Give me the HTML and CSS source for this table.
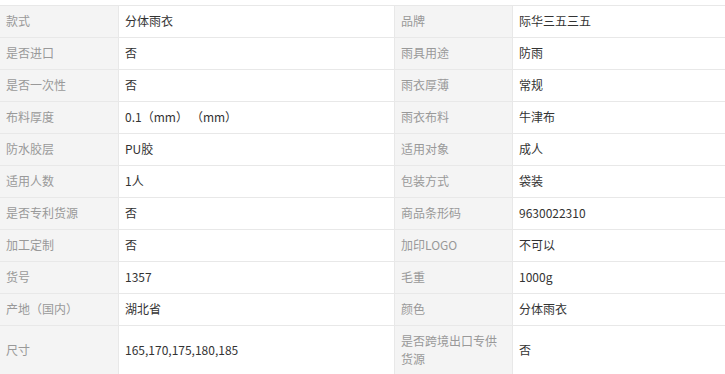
FILE: index.html
```html
<!DOCTYPE html>
<html lang="zh-CN">
<head>
<meta charset="utf-8">
<title>商品参数</title>
<link rel="stylesheet" href="styles.css">
</head>
<body>
<div class="attrs">
  <div class="k">款式</div><div class="v">分体雨衣</div><div class="k">品牌</div><div class="v">际华三五三五</div>
  <div class="k">是否进口</div><div class="v">否</div><div class="k">雨具用途</div><div class="v">防雨</div>
  <div class="k">是否一次性</div><div class="v">否</div><div class="k">雨衣厚薄</div><div class="v">常规</div>
  <div class="k">布料厚度</div><div class="v">0.1（mm）&#8197;（mm）</div><div class="k">雨衣布料</div><div class="v">牛津布</div>
  <div class="k">防水胶层</div><div class="v">PU胶</div><div class="k">适用对象</div><div class="v">成人</div>
  <div class="k">适用人数</div><div class="v">1人</div><div class="k">包装方式</div><div class="v">袋装</div>
  <div class="k">是否专利货源</div><div class="v">否</div><div class="k">商品条形码</div><div class="v">9630022310</div>
  <div class="k">加工定制</div><div class="v">否</div><div class="k">加印LOGO</div><div class="v">不可以</div>
  <div class="k">货号</div><div class="v">1357</div><div class="k">毛重</div><div class="v">1000g</div>
  <div class="k">产地（国内）</div><div class="v">湖北省</div><div class="k">颜色</div><div class="v">分体雨衣</div>
  <div class="k">尺寸</div><div class="v">165,170,175,180,185</div><div class="k">是否跨境出口专供货源</div><div class="v">否</div>
</div>
</body>
</html>
```
FILE: styles.css
```css
html, body {
  margin: 0;
  padding: 0;
  background: #fff;
  overflow: hidden;
}
body {
  padding-top: 5px;
  font-family: "Noto Sans CJK SC", "Noto Sans", sans-serif;
  font-size: 12px;
}
.attrs {
  display: grid;
  grid-template-columns: 119px 276px 118px 1fr;
  border-top: 1px solid #e8e8e8;
}
.k, .v {
  display: flex;
  align-items: center;
  padding: 6px 6px 7px 6px;
  line-height: 18px;
  border-bottom: 1px solid #e8e8e8;
  border-right: 1px solid #e8e8e8;
  min-height: 18px;
}
.k {
  background: #f4f4f4;
  color: #999;
}
.v {
  background: #fff;
  color: #333;
}
.v:nth-child(4n) {
  border-right: none;
}
```
